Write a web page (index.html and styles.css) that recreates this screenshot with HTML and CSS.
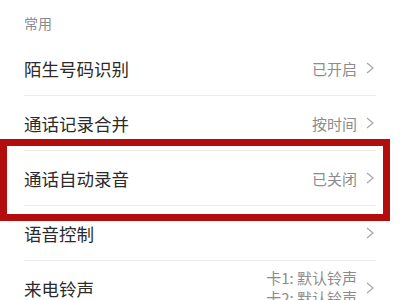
FILE: index.html
```html
<!DOCTYPE html>
<html lang="zh-CN">
<head>
    <meta charset="UTF-8">
    <meta name="viewport" content="width=device-width, initial-scale=1.0">
    <title>通话设置</title>
    <link rel="stylesheet" href="styles.css">
</head>
<body>
    <div class="page">
        <div class="group-title">常用</div>
        <div class="list">
            <div class="row">
                <span class="label">陌生号码识别</span>
                <span class="value">已开启</span>
                <svg class="chevron" viewBox="0 0 8 12"><polyline points="1,1 7,6 1,11"/></svg>
            </div>
            <div class="row">
                <span class="label">通话记录合并</span>
                <span class="value">按时间</span>
                <svg class="chevron" viewBox="0 0 8 12"><polyline points="1,1 7,6 1,11"/></svg>
            </div>
            <div class="row">
                <span class="label">通话自动录音</span>
                <span class="value">已关闭</span>
                <svg class="chevron" viewBox="0 0 8 12"><polyline points="1,1 7,6 1,11"/></svg>
            </div>
            <div class="row">
                <span class="label">语音控制</span>
                <svg class="chevron" viewBox="0 0 8 12"><polyline points="1,1 7,6 1,11"/></svg>
            </div>
            <div class="row">
                <span class="label">来电铃声</span>
                <span class="value multi">卡1: 默认铃声<br>卡2: 默认铃声</span>
                <svg class="chevron" viewBox="0 0 8 12"><polyline points="1,1 7,6 1,11"/></svg>
            </div>
        </div>
        <!-- annotation frame around the recording row -->
        <div class="highlight"></div>
    </div>
</body>
</html>
```

FILE: styles.css
```css
body {
    margin: 0;
    background: #fff;
    font-family: "Noto Sans CJK SC", "Noto Sans", sans-serif;
    color: #333;
}
.page {
    position: relative;
    width: 400px;
    height: 300px;
    overflow: hidden;
}
.group-title {
    height: 41px;
    padding-left: 24px;
    display: flex;
    align-items: center;
    padding-top: 4px;
    box-sizing: border-box;
    font-size: 14px;
    color: #8a8a8a;
}
.list {
    padding: 0 24px;
}
.row {
    height: 55px;
    display: flex;
    align-items: center;
    border-bottom: 1px solid #ebebeb;
    box-sizing: border-box;
}
.label {
    flex: 1;
    font-size: 17.5px;
    color: #2b2b2b;
}
.value {
    font-size: 15px;
    color: #8c8c8c;
    margin-right: 9px;
}
.value.multi {
    text-align: right;
    line-height: 20px;
}
.chevron {
    width: 8px;
    height: 12px;
    margin-right: 2px;
    fill: none;
    stroke: #a8a8a8;
    stroke-width: 1.2;
}
.highlight {
    position: absolute;
    left: 0;
    top: 139px;
    width: 390px;
    height: 82px;
    border: 7px solid #b30d0d;
    box-sizing: border-box;
}
```
